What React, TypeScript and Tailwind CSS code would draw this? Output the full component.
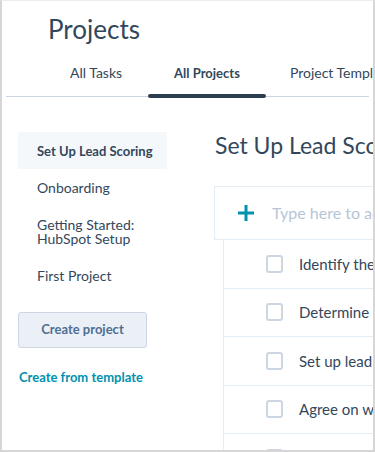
const tasks = [
  'Identify the ideal customer profile',
  'Determine lead scoring criteria',
  'Set up lead scoring property',
  'Agree on what makes a lead qualified',
  'Review scoring with sales',
];

const projects = [
  { name: 'Set Up Lead Scoring', active: true },
  { name: 'Onboarding' },
  { name: 'Getting Started:\nHubSpot Setup' },
  { name: 'First Project' },
];

export default function App() {
  return (
    <div className="w-[375px] h-[452px] overflow-hidden bg-white border-l-2 border-r-2 border-b-2 border-t border-t-[#ececec] border-[#d6d6d6] text-[#33475b] font-['Lato',sans-serif]">
      {/* Header */}
      <header>
        <h1 className="pl-[46px] pt-[11px] text-[26px] leading-[34px] font-normal whitespace-nowrap">Projects</h1>
        <nav className="mx-[4px] mt-[17px] flex pl-[38px] border-b border-[#cbd6e2] whitespace-nowrap text-[14px] leading-[20px]">
          <div className="px-[26px] pb-[13px]">All Tasks</div>
          <div className="relative px-[26px] pb-[13px] text-[13px] font-bold">
            All Projects
            <span className="absolute left-0 right-0 -bottom-[2px] h-[4px] rounded-full bg-[#2d3e50]" />
          </div>
          <div className="px-[24px] pb-[13px]">Project Templates</div>
        </nav>
      </header>

      <div className="flex">
        {/* Sidebar */}
        <aside className="ml-[16px] pt-[35px] w-[149px] shrink-0">
          <ul className="text-[14px] leading-[14px]">
            {projects.map((p) => (
              <li
                key={p.name}
                className={
                  p.active
                    ? 'px-[19px] py-[11.5px] bg-[#f5f8fa] font-bold text-[13px] whitespace-nowrap'
                    : 'px-[19px] py-[11.5px] whitespace-pre-line'
                }
              >
                {p.name}
              </li>
            ))}
          </ul>
          <button className="mt-[18px] w-[129px] h-[36px] rounded-[3px] bg-[#eaf0f6] border border-[#cbd6e2] text-[13px] font-bold text-[#506e91]">
            Create project
          </button>
          <div className="mt-[20px] pl-[1px] text-[13px] leading-[18px] font-bold text-[#0091ae] whitespace-nowrap">
            Create from template
          </div>
        </aside>

        {/* Project detail */}
        <main className="ml-[47px] pt-[35px] min-w-0 flex-1">
          <h2 className="pl-[1px] text-[23px] leading-[26px] font-normal whitespace-nowrap">Set Up Lead Scoring</h2>
          <div className="mt-[28px] w-[300px] h-[54px] border border-[#e5edf4] flex items-center pl-[23px]">
            <svg width="16" height="16" viewBox="0 0 16 16" className="shrink-0 text-[#0091ae]">
              <rect x="6.5" y="0" width="3" height="16" fill="currentColor" />
              <rect x="0" y="6.5" width="16" height="3" fill="currentColor" />
            </svg>
            <span className="ml-[18px] text-[16px] text-[#b7c6d6] whitespace-nowrap">Type here to add a task</span>
          </div>
          <ul className="ml-[9px] w-[300px] border-l border-[#e5edf4]">
            {tasks.map((t) => (
              <li key={t} className="h-[48.5px] flex items-center pl-[42px] border-b border-[#e5edf4]">
                <span className="w-[17px] h-[18px] rounded-[3px] border-2 border-[#cbd6e2] bg-white shrink-0" />
                <span className="ml-[16px] text-[15px] whitespace-nowrap">{t}</span>
              </li>
            ))}
          </ul>
        </main>
      </div>
    </div>
  );
}
